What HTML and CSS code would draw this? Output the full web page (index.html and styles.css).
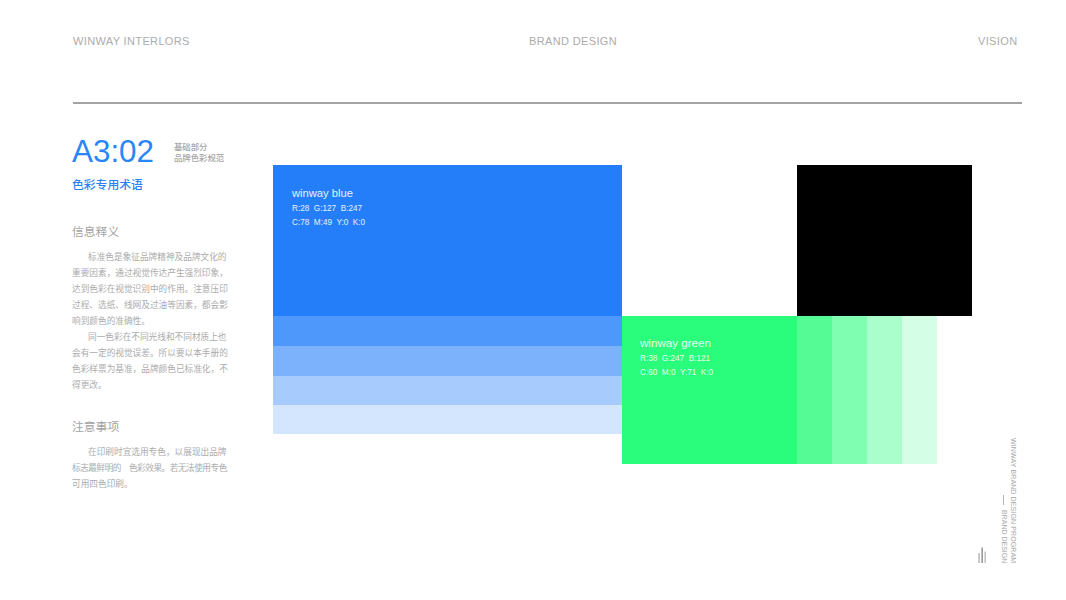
FILE: index.html
```html
<!DOCTYPE html>
<html lang="zh-CN">
<head>
<meta charset="utf-8">
<title>Brand Design</title>
<link rel="stylesheet" href="styles.css">
</head>
<body>
<div class="page">
  <header class="top">
    <span>WINWAY INTERLORS</span>
    <span>BRAND DESIGN</span>
    <span>VISION</span>
  </header>
  <div class="rule"></div>
  <div class="content">
    <aside class="side">
      <div class="title-row">
        <div class="code">A3:02</div>
        <div class="sub">基础部分<br>品牌色彩规范</div>
      </div>
      <h1 class="blue-title">色彩专用术语</h1>
      <h2 class="head head-first">信息释义</h2>
      <p class="para">标准色是象征品牌精神及品牌文化的重要因素，通过视觉传达产生强烈印象，达到色彩在视觉识别中的作用。注意压印过程、选纸、线网及过油等因素，都会影响到颜色的准确性。</p>
      <p class="para">同一色彩在不同光线和不同材质上也会有一定的视觉误差。所以要以本手册的色彩样票为基准，品牌颜色已标准化，不得更改。</p>
      <h2 class="head head-second">注意事项</h2>
      <p class="para">在印刷时宜选用专色，以展现出品牌<span class="tight">标志最鲜明的</span><span class="gap"></span><span class="tight">色彩效果。若无法使用专色</span>可用四色印刷。</p>
    </aside>
    <main class="swatches">
      <div class="sw blue-main">
        <div class="sw-name">winway blue</div>
        <div class="sw-val">R:28&nbsp; G:127&nbsp; B:247</div>
        <div class="sw-val">C:78&nbsp; M:49&nbsp; Y:0&nbsp; K:0</div>
      </div>
      <div class="sw black"></div>
      <div class="sw b80"></div>
      <div class="sw b60"></div>
      <div class="sw b40"></div>
      <div class="sw b20"></div>
      <div class="sw green-main">
        <div class="sw-name">winway green</div>
        <div class="sw-val">R:38&nbsp; G:247&nbsp; B:121</div>
        <div class="sw-val">C:60&nbsp; M:0&nbsp; Y:71&nbsp; K:0</div>
      </div>
      <div class="sw g80"></div>
      <div class="sw g60"></div>
      <div class="sw g40"></div>
      <div class="sw g20"></div>
    </main>
  </div>
  <div class="v-text v-one">WINWAY BRAND DESIGN PROGRAM</div>
  <div class="v-text v-two"><span class="dash"></span>BRAND DESIGN</div>
  <svg class="bars" width="10" height="16" viewBox="0 0 10 16" aria-hidden="true">
    <rect x="0.3" y="6" width="1.6" height="10" fill="#bdbdbd"/>
    <rect x="3.4" y="0.5" width="1.6" height="15.5" fill="#9a9a9a"/>
    <rect x="6.4" y="4.5" width="1.6" height="11.5" fill="#c4c4c4"/>
  </svg>
</div>
</body>
</html>
```
FILE: styles.css
```css
* { box-sizing: border-box; }
html, body { margin: 0; padding: 0; background: #fff; }
body { font-family: "Liberation Sans", "Noto Sans CJK SC", sans-serif; }
.page { position: relative; width: 1066px; height: 600px; overflow: hidden; }

.top {
  display: grid;
  grid-template-columns: 456px 449px auto;
  padding: 35px 0 0 73px;
  font-size: 11px;
  line-height: 13px;
  letter-spacing: 0.36px;
  color: #acacac;
}
.rule { height: 2px; margin: 54px 44px 0 73px; background: #a3a3a3; }

.content { display: flex; padding: 0 0 0 72px; }
.side { width: 156px; margin-right: 45px; font-family: "Noto Sans CJK SC", "Liberation Sans", sans-serif; }

.title-row { display: flex; align-items: flex-start; margin-top: 28px; }
.code {
  width: 102px;
  font-family: "Liberation Sans", sans-serif;
  font-size: 31.4px;
  line-height: 40px;
  color: #2a86f8;
}
.sub { padding-top: 9px; font-size: 8.4px; line-height: 11px; color: #a6a6a6; font-weight: 500; white-space: nowrap; }
.blue-title { margin: 4px 0 0; font-size: 11.8px; line-height: 16px; font-weight: 500; color: #2a83f6; }
.head { margin: 0; font-size: 11.8px; line-height: 16px; font-weight: 400; color: #a3a3a3; }
.head-first { margin-top: 31px; }
.head-second { margin-top: 26px; }
.para {
  margin: 0;
  width: 157px;
  font-size: 8.67px;
  line-height: 16px;
  color: #ababab;
  text-indent: 16px;
}
.head-first + .para { margin-top: 9px; }
.head-second + .para { margin-top: 9px; }
.tight { letter-spacing: -0.5px; }
.gap { display: inline-block; width: 8px; }

.swatches {
  display: grid;
  grid-template-columns: 349px 175px repeat(5, 35px);
  grid-template-rows: 151px 30px 30px 29px 29px 30px;
  margin-top: 61px;
}
.sw { min-width: 0; }
.blue-main { grid-column: 1; grid-row: 1; background: #257ef9; padding: 21px 0 0 19px; }
.black { grid-column: 3 / 8; grid-row: 1; background: #000; }
.b80 { grid-column: 1; grid-row: 2; background: #4f98fb; }
.b60 { grid-column: 1; grid-row: 3; background: #7cb2fb; }
.b40 { grid-column: 1; grid-row: 4; background: #a8cbfd; }
.b20 { grid-column: 1; grid-row: 5; background: #d4e5fe; }
.green-main { grid-column: 2; grid-row: 2 / 7; background: #2afd7c; padding: 20px 0 0 18px; }
.g80 { grid-column: 3; grid-row: 2 / 7; background: #55fc96; }
.g60 { grid-column: 4; grid-row: 2 / 7; background: #7ffdb0; }
.g40 { grid-column: 5; grid-row: 2 / 7; background: #aafecb; }
.g20 { grid-column: 6; grid-row: 2 / 7; background: #d4fee5; }

.sw-name { font-size: 11.2px; line-height: 14px; color: #e4f0ff; margin-bottom: 2px; }
.sw-val { font-size: 8.2px; line-height: 14px; color: #e4f0ff; white-space: nowrap; }
.green-main .sw-name { font-size: 11.6px; }
.green-main .sw-name, .green-main .sw-val { color: #e4ffef; }

.v-text {
  position: absolute;
  writing-mode: vertical-rl;
  font-size: 7px;
  line-height: 8px;
  color: #a8a8a8;
  white-space: nowrap;
}
.v-one { left: 1009px; top: 438px; letter-spacing: 0.12px; }
.v-two { left: 1000px; top: 495px; display: flex; align-items: center; }
.dash { display: block; width: 1px; height: 10px; margin-bottom: 5px; margin-right: 2px; background: #b8b8b8; }
.bars { position: absolute; left: 978px; top: 547px; }
```
